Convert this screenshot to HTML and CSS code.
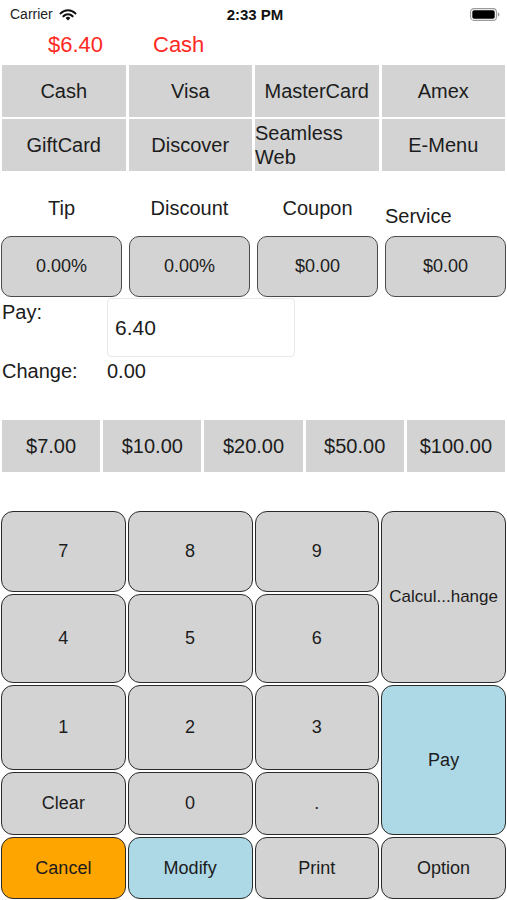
FILE: index.html
```html
<!DOCTYPE html>
<html lang="en">
<head>
  <meta charset="UTF-8" />
  <meta name="viewport" content="width=device-width, initial-scale=1.0"/>
  <title>Payment</title>
  <link rel="stylesheet" href="styles.css">
</head>
<body>
  <div class="screen">
    <div class="status-bar">
      <div class="status-left">
        <span>Carrier</span>
        <svg class="wifi" width="18" height="13" viewBox="0 0 18 13">
          <path d="M1.6 5.4 A10.2 10.2 0 0 1 16.4 5.4" fill="none" stroke="#111" stroke-width="2.1" stroke-linecap="round"/>
          <path d="M4.4 8.3 A6.2 6.2 0 0 1 13.6 8.3" fill="none" stroke="#111" stroke-width="2.1" stroke-linecap="round"/>
          <path d="M9 12.6 L6.6 10 A3.4 3.4 0 0 1 11.4 10 Z" fill="#111"/>
        </svg>
      </div>
      <div class="status-time">2:33 PM</div>
      <div class="status-right">
        <svg width="30" height="13" viewBox="0 0 30 13">
          <rect x="0.6" y="0.6" width="25.8" height="11.8" rx="3.4" fill="none" stroke="#9a9a9a" stroke-width="1.1"/>
          <rect x="2.3" y="2.3" width="22.4" height="8.4" rx="1.8" fill="#000"/>
          <path d="M27.8 4.3 Q29.4 4.6 29.4 6.5 Q29.4 8.4 27.8 8.7 Z" fill="#9a9a9a"/>
        </svg>
      </div>
    </div>

    <div class="total-row">
      <span class="total-amount">$6.40</span>
      <span class="total-method">Cash</span>
    </div>

    <div class="tender-grid">
      <button class="tender">Cash</button>
      <button class="tender">Visa</button>
      <button class="tender">MasterCard</button>
      <button class="tender">Amex</button>
      <button class="tender">GiftCard</button>
      <button class="tender">Discover</button>
      <button class="tender tender-left">Seamless Web</button>
      <button class="tender">E-Menu</button>
    </div>

    <div class="adjust-labels">
      <span>Tip</span>
      <span>Discount</span>
      <span>Coupon</span>
      <span class="label-low">Service</span>
    </div>

    <div class="adjust-buttons">
      <button class="adjust">0.00%</button>
      <button class="adjust">0.00%</button>
      <button class="adjust">$0.00</button>
      <button class="adjust">$0.00</button>
    </div>

    <div class="pay-block">
      <div class="pay-label">Pay:</div>
      <div class="pay-input">6.40</div>
      <div class="change-label">Change:</div>
      <div class="change-value">0.00</div>
    </div>

    <div class="quick-cash">
      <button class="cash">$7.00</button>
      <button class="cash">$10.00</button>
      <button class="cash">$20.00</button>
      <button class="cash">$50.00</button>
      <button class="cash">$100.00</button>
    </div>

    <div class="keypad">
      <button class="key">7</button>
      <button class="key">8</button>
      <button class="key">9</button>
      <button class="key key-tall key-calc">Calcul...hange</button>
      <button class="key">4</button>
      <button class="key">5</button>
      <button class="key">6</button>
      <button class="key">1</button>
      <button class="key">2</button>
      <button class="key">3</button>
      <button class="key key-tall key-blue">Pay</button>
      <button class="key">Clear</button>
      <button class="key">0</button>
      <button class="key">.</button>
      <button class="key key-orange">Cancel</button>
      <button class="key key-blue">Modify</button>
      <button class="key">Print</button>
      <button class="key">Option</button>
    </div>
  </div>
</body>
</html>
```

FILE: styles.css
```css
body {
  margin: 0;
  padding: 0;
  background: #ffffff;
  font-family: 'Liberation Sans', Arial, sans-serif;
  color: #1c1c1c;
}

.screen {
  width: 507px;
  height: 900px;
  overflow: hidden;
}

button {
  font-family: inherit;
  color: #1c1c1c;
  margin: 0;
  padding: 0;
  cursor: pointer;
}

/* status bar */
.status-bar {
  height: 28px;
  display: grid;
  grid-template-columns: 1fr auto 1fr;
  align-items: center;
  padding: 0 7px 0 10px;
  font-size: 14px;
}

.status-left {
  display: flex;
  align-items: center;
  gap: 6px;
  color: #222;
}

.status-time {
  font-size: 15px;
  font-weight: bold;
  color: #111;
}

.status-right {
  display: flex;
  justify-content: flex-end;
}

/* total */
.total-row {
  height: 34px;
  display: flex;
  align-items: center;
  padding-left: 48px;
  color: #ff2a1f;
  font-size: 22px;
}

.total-amount {
  width: 105px;
}

/* tender types */
.tender-grid {
  margin-top: 3px;
  padding: 0 2px;
  display: grid;
  grid-template-columns: repeat(4, 1fr);
  grid-auto-rows: 52px;
  column-gap: 3px;
  row-gap: 2px;
}

.tender {
  background: #d3d3d3;
  border: none;
  font-size: 20px;
  display: flex;
  align-items: center;
  justify-content: center;
  line-height: 24px;
}

.tender-left {
  justify-content: flex-start;
  text-align: left;
}

/* tip / discount */
.adjust-labels {
  margin-top: 26px;
  height: 39px;
  padding: 0 1px;
  display: grid;
  grid-template-columns: repeat(4, 1fr);
  column-gap: 7px;
  font-size: 20px;
  line-height: 22px;
  text-align: center;
}

.label-low {
  padding-top: 8px;
  text-align: left;
}

.adjust-buttons {
  height: 61px;
  padding: 0 1px;
  display: grid;
  grid-template-columns: repeat(4, 1fr);
  column-gap: 7px;
}

.adjust {
  background: #d3d3d3;
  border: 1px solid #4a4a4a;
  border-radius: 10px;
  font-size: 18px;
}

/* pay / change */
.pay-block {
  margin-top: 1px;
  display: grid;
  grid-template-columns: 107px 188px;
  grid-template-rows: 59px 28px;
  font-size: 20px;
}

.pay-label {
  padding: 2px 0 0 2px;
  line-height: 24px;
}

.pay-input {
  border: 1px solid #e8e8e8;
  border-radius: 4px;
  padding-left: 7px;
  font-size: 21px;
  display: flex;
  align-items: center;
}

.change-label {
  padding-left: 2px;
  line-height: 28px;
}

.change-value {
  line-height: 28px;
}

/* quick cash */
.quick-cash {
  margin-top: 35px;
  height: 52px;
  padding: 0 2px;
  display: grid;
  grid-template-columns: repeat(5, 1fr);
  column-gap: 3px;
}

.cash {
  background: #d3d3d3;
  border: none;
  font-size: 20px;
}

/* keypad */
.keypad {
  margin-top: 39px;
  padding: 0 1px;
  display: grid;
  grid-template-columns: repeat(4, 1fr);
  grid-template-rows: 81px 89px 85px 63px 62px;
  gap: 2px;
}

.key {
  background: #d3d3d3;
  border: 1.5px solid #2a2a2a;
  border-radius: 12px;
  font-size: 18px;
}

.key-tall {
  grid-column: 4;
  grid-row: span 2;
}

.key-calc {
  font-size: 17px;
  white-space: nowrap;
}

.key-blue {
  background: #add8e6;
}

.key-orange {
  background: #ffa500;
}
```
